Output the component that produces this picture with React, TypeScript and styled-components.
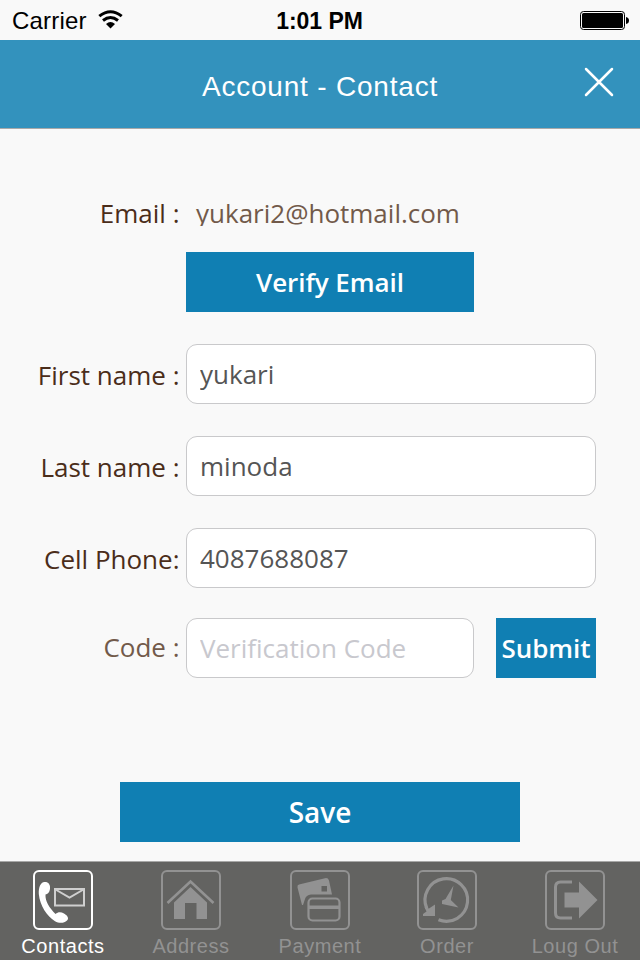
import React from "react";
import styled, { createGlobalStyle } from "styled-components";

const SANS = '"Liberation Sans", Arial, sans-serif';
const OPEN = '"Open Sans", sans-serif';

const GlobalStyle = createGlobalStyle`
  *, *::before, *::after { box-sizing: border-box; }
  html, body { margin: 0; padding: 0; background: #f9f9f9; }
`;

const Screen = styled.div`
  width: 640px;
  height: 960px;
  display: flex;
  flex-direction: column;
  overflow: hidden;
  background: #f9f9f9;
  font-family: ${OPEN};
`;

const StatusBar = styled.div`
  height: 40px;
  display: grid;
  grid-template-columns: 1fr auto 1fr;
  align-items: center;
  padding: 2px 11px 0 12px;
  font: 24px/38px ${SANS};
  color: #000;
`;

const Carrier = styled.div`
  display: flex;
  align-items: center;
  gap: 11px;
  letter-spacing: 0.2px;
`;

const Clock = styled.div`
  margin-left: -2px;
  font-size: 23px;
  font-weight: 700;
  letter-spacing: -0.05px;
`;

const BatteryIcon = styled.svg`
  justify-self: end;
  margin-top: -2px;
`;

const WifiIcon = styled.svg`
  margin-top: -3px;
`;

const Header = styled.header`
  height: 89px;
  display: grid;
  grid-template-columns: 80px 1fr 80px;
  align-items: center;
  background: #3392bd;
  border-bottom: 1px solid #a9a9a9;
`;

const Title = styled.h1`
  grid-column: 2;
  margin: 0;
  padding-top: 5px;
  text-align: center;
  font: 400 28px/40px ${SANS};
  letter-spacing: 0.8px;
  color: #fff;
`;

const CloseButton = styled.button`
  display: flex;
  padding: 0 0 4px 24px;
  border: 0;
  background: none;
`;

const Form = styled.main`
  flex: 1;
  display: flex;
  flex-direction: column;
  padding-top: 69px;
`;

const Row = styled.div<{ $gap?: number; $height?: number }>`
  height: ${(p) => p.$height ?? 60}px;
  margin-bottom: ${(p) => p.$gap ?? 32}px;
  display: grid;
  grid-template-columns: 179.5px 1fr;
  column-gap: 6.5px;
  padding-right: 44px;
`;

const Label = styled.label<{ $muted?: boolean; $shift?: number }>`
  margin-top: ${(p) => p.$shift ?? 1}px;
  text-align: right;
  white-space: pre;
  font-size: 26px;
  line-height: 60px;
  color: ${(p) => (p.$muted ? "#725a4a" : "#4b2d1a")};
`;

const EmailLabel = styled(Label)`
  line-height: 30px;
`;

const EmailValue = styled.span`
  height: 28px;
  padding-left: 10px;
  overflow: hidden;
  font-size: 26px;
  line-height: 30px;
  color: #725a4a;
`;

const Input = styled.input<{ $width?: number }>`
  width: ${(p) => (p.$width ? `${p.$width}px` : "100%")};
  height: 60px;
  padding: 0 13px;
  border: 1px solid #c9c9cb;
  border-radius: 11px;
  outline: 0;
  background: #fff;
  font: 26px ${OPEN};
  color: #555;
  &::placeholder {
    color: #c8c8ce;
    opacity: 1;
  }
`;

const Button = styled.button<{ $width: number; $size?: number }>`
  width: ${(p) => p.$width}px;
  height: 60px;
  padding: 0;
  border: 0;
  background: #107fb3;
  color: #fff;
  font: 600 ${(p) => p.$size ?? 26}px/60px ${OPEN};
  letter-spacing: -0.05px;
`;

const VerifyRow = styled(Row)`
  & > button { grid-column: 2; }
`;

const CodeFields = styled.div`
  display: flex;
  justify-content: space-between;
`;

const SaveArea = styled.div`
  margin-top: 104px;
  display: flex;
  justify-content: center;
`;

const TabBar = styled.nav`
  height: 99px;
  display: grid;
  grid-template-columns: 126px 130px 128px 126px 130px;
  border-top: 1px solid #a8a8a7;
  background: #636361;
`;

const Tab = styled.a<{ $active?: boolean }>`
  display: flex;
  flex-direction: column;
  align-items: center;
  padding-top: 8px;
  color: ${(p) => (p.$active ? "#fff" : "#929292")};
  font: 20px/24px ${SANS};
  letter-spacing: 0.55px;
  svg { display: block; margin-bottom: 4px; }
`;

function Frame({ children }: { children: React.ReactNode }) {
  return (
    <svg width="60" height="60" viewBox="0 0 60 60" fill="currentColor">
      <rect x="1" y="1" width="58" height="58" rx="5" fill="none" stroke="currentColor" strokeWidth="2" />
      {children}
    </svg>
  );
}

const ContactsIcon = () => (
  <Frame>
    <path d="M11.500 12C15.500 11.800 17.500 14.500 17 19C16.600 22.500 14.500 24 12.500 24.500C12 31 16.500 38 22.500 44C25 41.800 28 41.800 31 43.500C35 46 36 48.500 34 50.500C31 53.500 26 53.500 22 51.200C14 46 7 36 5.800 24C5.500 17 7.500 12.500 11.500 12Z" />
    <g fill="none" stroke="#cfcfcf" strokeWidth="2">
      <rect x="22" y="19" width="29" height="16.500" />
      <path d="M22.500 19.500L36.500 27.500L50.500 19.500" />
    </g>
  </Frame>
);

const AddressIcon = () => (
  <Frame>
    <path d="M6.500 33L29.500 11.500L52.500 33" fill="none" stroke="currentColor" strokeWidth="2.600" />
    <path d="M29.500 17L46 32.500V49H35.500V33H24V49H13V32.500Z" />
  </Frame>
);

const PaymentIcon = () => (
  <Frame>
    <path fillRule="evenodd" d="M9 14.500L35 8.200Q38 7.500 39 10.500L42 24.500H21Q16 25 15 29L13 35H12L7.500 17.500Q7 15 9 14.500ZM31.500 16V21.500H37V16Z" />
    <rect x="18.500" y="28.500" width="31" height="22" rx="4" fill="none" stroke="currentColor" strokeWidth="2.200" />
    <path d="M18 35.500H50V39H18Z" />
  </Frame>
);

const OrderIcon = () => (
  <Frame>
    <path d="M21.500 49.800A21.300 21.300 0 1 0 9.800 38.500" fill="none" stroke="currentColor" strokeWidth="3.200" />
    <path d="M18 34.500V46H6V44L9.500 41.500L7.500 37L12 38.500Z" />
    <path d="M36.500 15.500L33.800 30L41.500 37.500L25 34V30.500L28.500 29Z" />
  </Frame>
);

const LogoutIcon = () => (
  <Frame>
    <path d="M27 12H15.500Q10.500 12 10.500 17V43Q10.500 48 15.500 48H27" fill="none" stroke="currentColor" strokeWidth="3" />
    <path d="M19.500 22.500H34V11.500L52.500 30L34 48.500V37.500H19.500Z" />
  </Frame>
);

const tabs = [
  { label: "Contacts", icon: <ContactsIcon />, active: true },
  { label: "Address", icon: <AddressIcon /> },
  { label: "Payment", icon: <PaymentIcon /> },
  { label: "Order", icon: <OrderIcon /> },
  { label: "Loug Out", icon: <LogoutIcon /> },
];

export default function App() {
  return (
    <Screen>
      <GlobalStyle />
      <StatusBar>
        <Carrier>
          Carrier
          <WifiIcon width="25" height="19" viewBox="0 0 25 19" fill="none" stroke="#000" strokeWidth="3">
            <path d="M1.300 6.200Q12.500 -2.800 23.700 6.200" />
            <path d="M5 10.500Q12.500 4.500 20 10.500" />
            <path d="M8 14Q12.500 10.200 17 14L12.500 18.500Z" fill="#000" stroke="none" />
          </WifiIcon>
        </Carrier>
        <Clock>1:01 PM</Clock>
        <BatteryIcon width="49" height="19" viewBox="0 0 49 19">
          <rect x="0.500" y="0.500" width="44" height="18" rx="3" fill="none" stroke="#000" />
          <rect x="2" y="2" width="41" height="15" rx="1.500" />
          <path d="M46 6Q49 6.500 49 9.500T46 13Z" />
        </BatteryIcon>
      </StatusBar>
      <Header>
        <Title>Account - Contact</Title>
        <CloseButton aria-label="Close">
          <svg width="30" height="30" viewBox="0 0 30 30" stroke="#fff" strokeWidth="2.500" strokeLinecap="round">
            <path d="M2 2L28 28M28 2L2 28" />
          </svg>
        </CloseButton>
      </Header>
      <Form>
        <Row $height={28} $gap={26}>
          <EmailLabel $shift={0}>Email :</EmailLabel>
          <EmailValue>yukari2@hotmail.com</EmailValue>
        </Row>
        <VerifyRow>
          <Button $width={288}>Verify Email</Button>
        </VerifyRow>
        <Row>
          <Label>First name :</Label>
          <Input defaultValue="yukari" />
        </Row>
        <Row>
          <Label>Last name :</Label>
          <Input defaultValue="minoda" />
        </Row>
        <Row $gap={30}>
          <Label>Cell Phone:</Label>
          <Input defaultValue="4087688087" />
        </Row>
        <Row $gap={0}>
          <Label $muted $shift={-1}>Code :</Label>
          <CodeFields>
            <Input $width={288} placeholder="Verification Code" />
            <Button $width={100}>Submit</Button>
          </CodeFields>
        </Row>
        <SaveArea>
          <Button $width={400} $size={28}>Save</Button>
        </SaveArea>
      </Form>
      <TabBar>
        {tabs.map((t) => (
          <Tab key={t.label} $active={t.active}>
            {t.icon}
            {t.label}
          </Tab>
        ))}
      </TabBar>
    </Screen>
  );
}
